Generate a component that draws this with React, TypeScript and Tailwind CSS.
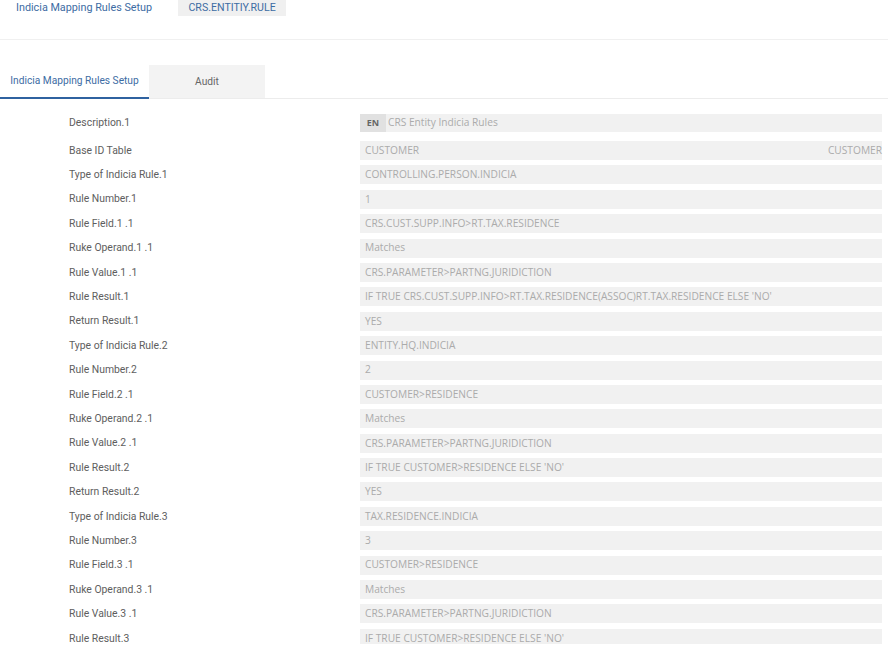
import React from 'react';

const rows: [string, string][] = [
  ['Base ID Table', 'CUSTOMER'],
  ['Type of Indicia Rule.1', 'CONTROLLING.PERSON.INDICIA'],
  ['Rule Number.1', '1'],
  ['Rule Field.1 .1', 'CRS.CUST.SUPP.INFO>RT.TAX.RESIDENCE'],
  ['Ruke Operand.1 .1', 'Matches'],
  ['Rule Value.1 .1', 'CRS.PARAMETER>PARTNG.JURIDICTION'],
  ['Rule Result.1', "IF TRUE CRS.CUST.SUPP.INFO>RT.TAX.RESIDENCE(ASSOC)RT.TAX.RESIDENCE ELSE 'NO'"],
  ['Return Result.1', 'YES'],
  ['Type of Indicia Rule.2', 'ENTITY.HQ.INDICIA'],
  ['Rule Number.2', '2'],
  ['Rule Field.2 .1', 'CUSTOMER>RESIDENCE'],
  ['Ruke Operand.2 .1', 'Matches'],
  ['Rule Value.2 .1', 'CRS.PARAMETER>PARTNG.JURIDICTION'],
  ['Rule Result.2', "IF TRUE CUSTOMER>RESIDENCE ELSE 'NO'"],
  ['Return Result.2', 'YES'],
  ['Type of Indicia Rule.3', 'TAX.RESIDENCE.INDICIA'],
  ['Rule Number.3', '3'],
  ['Rule Field.3 .1', 'CUSTOMER>RESIDENCE'],
  ['Ruke Operand.3 .1', 'Matches'],
  ['Rule Value.3 .1', 'CRS.PARAMETER>PARTNG.JURIDICTION'],
  ['Rule Result.3', "IF TRUE CUSTOMER>RESIDENCE ELSE 'NO'"],
];

const label = "w-[360px] shrink-0 pl-[69px] text-[10.4px] text-[#5e5e5e] font-['Roboto',sans-serif]";
const box = "w-[522px] shrink-0 h-[19px] bg-[#f1f1f1] flex items-center pl-[5px] text-[10.2px] text-[#ababab] font-['Open_Sans',sans-serif] whitespace-nowrap";

const App = () => {
  return <div className="w-[888px] h-[651px] bg-white overflow-hidden font-['Roboto',sans-serif]">
      <header className="h-[40px] flex items-start pl-[16px] border-b border-[#f0f0f0]">
        <span className="mt-[1px] text-[10.8px] leading-[14px] text-[#3d6ca3]">Indicia Mapping Rules Setup</span>
        <span className="ml-[26px] h-[16px] w-[108px] bg-[#f0f0f0] flex items-center justify-center text-[10.6px] text-[#3d6ca3]">CRS.ENTITIY.RULE</span>
      </header>
      <div className="mt-[25px] flex h-[34px] border-b border-[#ececec]">
        <div className="w-[149px] flex items-center justify-center text-[10.2px] text-[#3d6ca3] border-b-2 border-[#2f62a0] -mb-px">Indicia Mapping Rules Setup</div>
        <div className="w-[116px] flex items-center justify-center bg-[#f3f3f3] text-[10.2px] text-[#666]">Audit</div>
      </div>
      <div className="mt-[15px] h-[530px] overflow-hidden">
        <div className="flex items-center mb-[9px]">
          <div className={label}>Description.1</div>
          <div className="w-[522px] shrink-0 h-[18px] bg-[#f1f1f1] flex items-center whitespace-nowrap">
            <span className="w-[26px] h-full bg-[#e1e1e1] flex items-center justify-center text-[9px] font-bold text-[#666] font-['Open_Sans',sans-serif]">EN</span>
            <span className="pl-[2px] text-[10.2px] text-[#ababab] font-['Open_Sans',sans-serif]">CRS Entity Indicia Rules</span>
          </div>
        </div>
        <div className="flex flex-col gap-[5.4px]">
          {rows.map(([k, v], i) => <div key={i} className="flex items-center">
              <div className={label}>{k}</div>
              <div className={box}>
                <span>{v}</span>
                {i === 0 && <span className="ml-auto">CUSTOMER</span>}
              </div>
            </div>)}
        </div>
      </div>
    </div>;
};

export default App;
